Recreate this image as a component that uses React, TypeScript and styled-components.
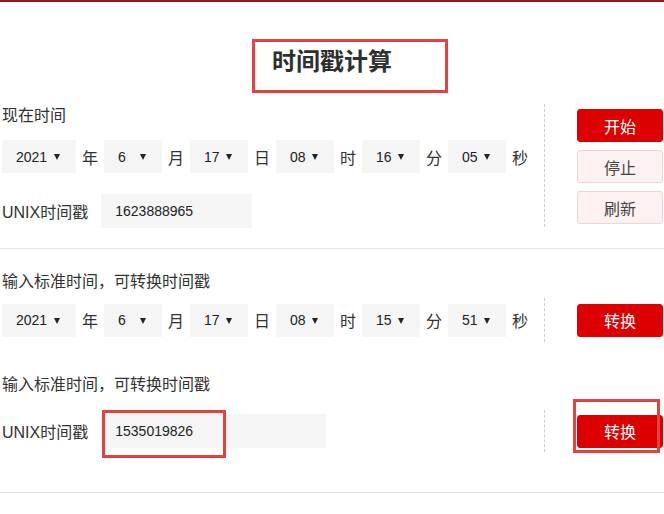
import styled, { createGlobalStyle } from "styled-components";

const GlobalStyle = createGlobalStyle`
  body {
    margin: 0;
    background: #fff;
    font-family: "Liberation Sans", "Noto Sans CJK SC", sans-serif;
    color: #333;
  }
`;

const Page = styled.div`
  position: relative;
  width: 664px;
  min-height: 514px;
  border-top: 2px solid #8e1b22;
  overflow: hidden;
`;

const Header = styled.div`
  height: 102px;
  padding-top: 44px;
  box-sizing: border-box;
  text-align: center;
`;

const Title = styled.h1`
  margin: 0;
  font-size: 24px;
  line-height: 32px;
  font-weight: 700;
  color: #2f2f2f;
`;

const Section = styled.div<{ $top?: number; $bottom: number }>`
  padding: ${(p) => p.$top ?? 0}px 0 ${(p) => p.$bottom}px 2px;
  border-bottom: 1px solid ${(p) => (p.$top ? "#ecdfdf" : "#e6e6e6")};
`;

const Split = styled.div<{ $height?: number; $gap?: number }>`
  display: flex;
  height: ${(p) => (p.$height ? `${p.$height}px` : "auto")};
  margin-top: ${(p) => p.$gap ?? 0}px;
`;

const Left = styled.div<{ $center?: boolean }>`
  flex: 1;
  display: flex;
  flex-direction: column;
  justify-content: ${(p) => (p.$center ? "center" : "flex-start")};
`;

const Side = styled.div<{ $center?: boolean }>`
  width: 120px;
  box-sizing: border-box;
  border-left: 1px dashed #cfcfcf;
  padding: ${(p) => (p.$center ? "0" : "5px")} 0 0 32px;
  display: flex;
  flex-direction: column;
  justify-content: ${(p) => (p.$center ? "center" : "flex-start")};
  gap: 8px;
`;

const Caption = styled.div<{ $gap?: number }>`
  font-size: 16px;
  line-height: 24px;
  margin-top: ${(p) => p.$gap ?? 0}px;
`;

const Row = styled.div<{ $gap?: number }>`
  display: flex;
  align-items: center;
  height: 33px;
  margin-top: ${(p) => p.$gap ?? 0}px;
`;

const Select = styled.div<{ $w: number }>`
  width: ${(p) => p.$w}px;
  height: 33px;
  box-sizing: border-box;
  padding: 0 16px 0 14px;
  background: #f5f5f5;
  display: flex;
  align-items: center;
  justify-content: space-between;
  font-size: 14px;
  color: #222;
`;

const Arrow = styled.span`
  width: 0;
  height: 0;
  border-left: 3px solid transparent;
  border-right: 3px solid transparent;
  border-top: 6px solid #222;
  margin-top: 1px;
`;

const Unit = styled.span`
  font-size: 16px;
  margin: 0 6px;
  color: #333;
`;

const FieldLabel = styled.span`
  font-size: 16px;
  margin-right: 13px;
  color: #333;
`;

const Input = styled.div<{ $w: number }>`
  width: ${(p) => p.$w}px;
  height: 34px;
  box-sizing: border-box;
  padding-left: 14px;
  background: #f5f5f5;
  display: flex;
  align-items: center;
  font-size: 14px;
  color: #222;
`;

const Button = styled.button<{ $light?: boolean }>`
  width: 86px;
  height: 33px;
  flex: none;
  border-radius: 3px;
  border: 1px solid ${(p) => (p.$light ? "#f2d4d4" : "#dc0000")};
  background: ${(p) => (p.$light ? "#fdf1f1" : "#dc0000")};
  color: ${(p) => (p.$light ? "#444" : "#fff")};
  font-family: "Liberation Sans", "Noto Sans CJK SC", sans-serif;
  font-size: 16px;
  padding: 0;
`;

const Marker = styled.div<{ $x: number; $y: number; $w: number; $h: number }>`
  position: absolute;
  left: ${(p) => p.$x}px;
  top: ${(p) => p.$y}px;
  width: ${(p) => p.$w}px;
  height: ${(p) => p.$h}px;
  box-sizing: border-box;
  border: 3px solid #e5413f;
  pointer-events: none;
`;

type Part = { value: string; width: number; unit: string };

const makeParts = (h: string, m: string, s: string): Part[] => [
  { value: "2021", width: 74, unit: "年" },
  { value: "6", width: 58, unit: "月" },
  { value: "17", width: 58, unit: "日" },
  { value: h, width: 58, unit: "时" },
  { value: m, width: 58, unit: "分" },
  { value: s, width: 58, unit: "秒" },
];

function DateRow({ parts, gap }: { parts: Part[]; gap?: number }) {
  return (
    <Row $gap={gap}>
      {parts.map((p) => (
        <span key={p.unit} style={{ display: "contents" }}>
          <Select $w={p.width}>
            {p.value}
            <Arrow />
          </Select>
          <Unit>{p.unit}</Unit>
        </span>
      ))}
    </Row>
  );
}

export default function App() {
  return (
    <>
      <GlobalStyle />
      <Page>
        <Header>
          <Title>时间戳计算</Title>
        </Header>

        <Section $bottom={21}>
          <Split>
            <Left>
              <Caption>现在时间</Caption>
              <DateRow parts={makeParts("08", "16", "05")} gap={12} />
              <Row $gap={21}>
                <FieldLabel>UNIX时间戳</FieldLabel>
                <Input $w={151}>1623888965</Input>
              </Row>
            </Left>
            <Side>
              <Button>开始</Button>
              <Button $light>停止</Button>
              <Button $light>刷新</Button>
            </Side>
          </Split>
        </Section>

        <Section $top={21} $bottom={40}>
          <Caption>输入标准时间，可转换时间戳</Caption>
          <Split $height={44} $gap={4}>
            <Left $center>
              <DateRow parts={makeParts("08", "15", "51")} />
            </Left>
            <Side $center>
              <Button>转换</Button>
            </Side>
          </Split>

          <Caption $gap={31}>输入标准时间，可转换时间戳</Caption>
          <Split $height={42} $gap={13}>
            <Left $center>
              <Row>
                <FieldLabel>UNIX时间戳</FieldLabel>
                <Input $w={225}>1535019826</Input>
              </Row>
            </Left>
            <Side $center>
              <Button>转换</Button>
            </Side>
          </Split>
        </Section>

        <Marker $x={252} $y={37} $w={196} $h={54} />
        <Marker $x={102} $y={408} $w={124} $h={48} />
        <Marker $x={573} $y={397} $w={87} $h={54} />
      </Page>
    </>
  );
}
